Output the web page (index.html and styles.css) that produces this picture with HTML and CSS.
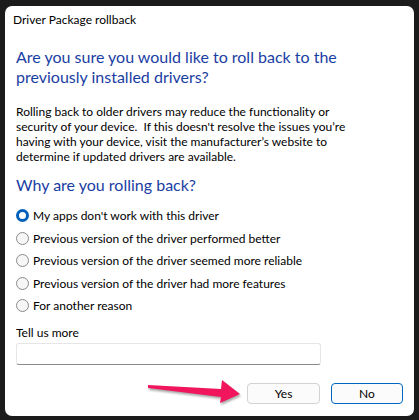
FILE: index.html
```html
<!DOCTYPE html>
<html>
<head>
<meta charset="utf-8">
<link rel="stylesheet" href="styles.css">
</head>
<body>
<div class="window">
  <div class="title">Driver Package rollback</div>
  <div class="content">
    <h1 class="heading">Are you sure you would like to roll back to the previously installed drivers?</h1>
    <p class="body-text">Rolling back to older drivers may reduce the functionality or security of your device.&nbsp; If this doesn't resolve the issues you’re having with your device, visit the manufacturer’s website to determine if updated drivers are available.</p>
    <h2 class="subheading">Why are you rolling back?</h2>
    <div class="radios">
      <label class="radio-row"><span class="radio checked"></span><span>My apps don't work with this driver</span></label>
      <label class="radio-row"><span class="radio"></span><span>Previous version of the driver performed better</span></label>
      <label class="radio-row"><span class="radio"></span><span>Previous version of the driver seemed more reliable</span></label>
      <label class="radio-row"><span class="radio"></span><span>Previous version of the driver had more features</span></label>
      <label class="radio-row"><span class="radio"></span><span>For another reason</span></label>
    </div>
    <div class="more-label">Tell us more</div>
    <div class="input"></div>
  </div>
  <div class="buttons">
    <button class="btn">Yes</button>
    <button class="btn primary">No</button>
  </div>
  <svg class="arrow" width="419" height="420" viewBox="0 0 419 420">
    <polygon points="148,385 221,389 222,380 240,394 220,403 221,397 148,388" fill="#f0155d"/>
  </svg>
</div>
</body>
</html>
```
FILE: styles.css
```css
* { box-sizing: border-box; }
html, body { margin: 0; padding: 0; }
body {
  background: #1b1b1b;
  width: 419px;
  height: 420px;
  overflow: hidden;
  padding: 6px 5px 4px 5px;
  font-family: Lato, "Noto Sans", sans-serif;
  color: #000;
}
.window {
  width: 409px;
  height: 410px;
  background: #fff;
  border-radius: 7px;
  display: flex;
  flex-direction: column;
  overflow: hidden;
}
.title {
  font-size: 12px;
  line-height: 16px;
  padding: 6px 0 0 8px;
}
.content {
  padding: 0 0 0 11px;
}
.heading {
  margin: 19px 0 0 0;
  font-weight: normal;
  font-size: 16px;
  line-height: 20px;
  color: #1a3ea3;
  width: 340px;
}
.body-text {
  margin: 17px 0 0 0;
  font-size: 12px;
  line-height: 15px;
  width: 340px;
}
.subheading {
  margin: 10.5px 0 0 0;
  font-weight: normal;
  font-size: 16px;
  line-height: 20px;
  color: #1a3ea3;
}
.radios {
  margin-top: 9.75px;
  display: flex;
  flex-direction: column;
}
.radio-row {
  display: flex;
  align-items: center;
  height: 22.5px;
  font-size: 12px;
  gap: 4px;
}
.radio {
  width: 13px;
  height: 13px;
  border-radius: 50%;
  border: 1px solid #8a8a8a;
  background: #f6f6f6;
  flex: none;
}
.radio.checked {
  border: 3.5px solid #005fb8;
  background: #fff;
}
.more-label {
  margin-top: 8.25px;
  font-size: 12px;
  line-height: 15px;
}
.input {
  margin-top: 3px;
  width: 305px;
  height: 22px;
  border: 1px solid #e6e6e6;
  border-bottom-color: #8a8a8a;
  border-radius: 3px;
  background: #fff;
}
.buttons {
  display: flex;
  justify-content: flex-end;
  gap: 11px;
  padding: 18px 11px 0 0;
}
.btn {
  width: 73px;
  height: 21px;
  font-family: inherit;
  font-size: 12px;
  background: #fbfbfb;
  border: 1px solid #d3d3d3;
  border-radius: 4px;
  padding: 0;
  color: #000;
}
.btn.primary {
  border-color: #0067c0;
  width: 72px;
}
.arrow {
  position: absolute;
  left: 0;
  top: 0;
  pointer-events: none;
  filter: drop-shadow(1px 2px 1px rgba(0,0,0,0.35));
}
```
